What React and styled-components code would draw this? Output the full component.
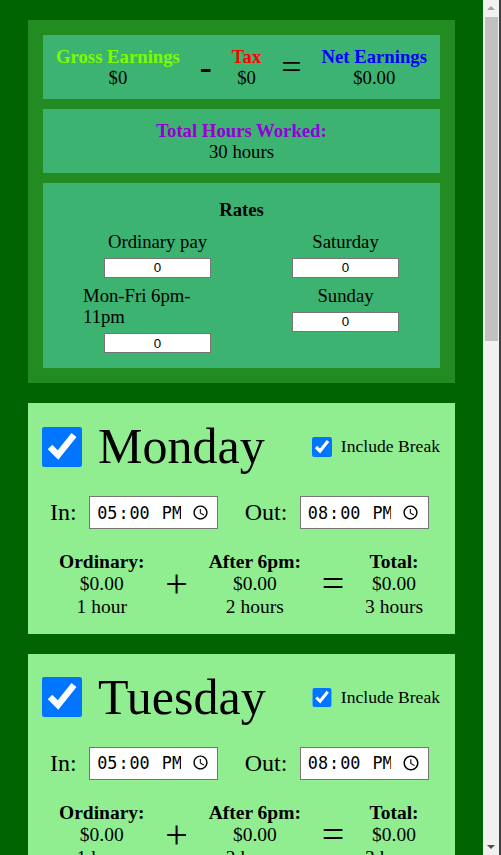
import React from "react";
import styled, { createGlobalStyle } from "styled-components";

const GlobalStyle = createGlobalStyle`
  body {
    margin: 0;
    background: #006400;
    font-family: "Liberation Serif", "Times New Roman", serif;
  }
`;

const Page = styled.div`
  display: flex;
  flex-direction: column;
  gap: 20px;
  width: 427px;
  padding: 20px 0 20px 28px;
`;

const ScrollTrack = styled.div`
  position: fixed;
  top: 0;
  right: 0;
  width: 16px;
  height: 100vh;
  background: #f1f1f1;
  border-right: 2px solid #3f3f3f;
`;

const ScrollArrow = styled.div`
  position: absolute;
  left: 4px;
  width: 0;
  height: 0;
  border-left: 4px solid transparent;
  border-right: 4px solid transparent;
  ${(p) =>
    p.down
      ? "bottom: 6px; border-top: 4px solid #505050;"
      : "top: 6px; border-bottom: 4px solid #a3a3a3;"}
`;

const ScrollThumb = styled.div`
  position: absolute;
  top: 17px;
  left: 2px;
  right: 1px;
  height: 324px;
  background: #c1c1c1;
`;

const Summary = styled.div`
  display: flex;
  flex-direction: column;
  gap: 10px;
  padding: 15px;
  background: #228b22;
`;

const Card = styled.div`
  background: #3cb371;
  padding: 10.5px 13px;
  font-size: 18.72px;
  line-height: 21.5px;
  text-align: center;
`;

const TotalsRow = styled.div`
  display: flex;
  justify-content: space-between;
  align-items: center;
`;

const Figure = styled.div`
  text-align: center;
`;

const Label = styled.div`
  font-weight: bold;
  color: ${(p) => p.color || "black"};
`;

const Operator = styled.div`
  font-size: 36px;
  line-height: 40px;
  font-weight: ${(p) => (p.bold ? "bold" : "normal")};
`;

const RatesCard = styled(Card)`
  padding: 16px 0 15px 40px;
`;

const RatesTitle = styled.div`
  font-weight: bold;
  margin-bottom: 10px;
  margin-left: -40px;
`;

const RatesGrid = styled.div`
  display: grid;
  grid-template-columns: 149px 149px;
  column-gap: 39px;
  align-items: start;
`;

const RateColumn = styled.div`
  display: flex;
  flex-direction: column;
  gap: 7px;
`;

const RateField = styled.label`
  display: flex;
  flex-direction: column;
  align-items: center;
  text-align: left;
  gap: 5.5px;
`;

const RateInput = styled.input`
  box-sizing: border-box;
  width: 107px;
  height: 20px;
  border: 1px solid #767676;
  padding: 0 2px;
  font-family: "Liberation Sans", Arial, sans-serif;
  font-size: 13.33px;
  text-align: center;
  background: white;
`;

const DayCard = styled.div`
  background: #90ee90;
  padding: 15px 15px 15.5px 14px;
`;

const DayHeader = styled.div`
  display: flex;
  align-items: center;
  justify-content: space-between;
  height: 57.5px;
`;

const DayTitle = styled.label`
  display: flex;
  align-items: center;
  gap: 16px;
  font-size: 50px;
  line-height: 57.5px;
`;

const BigCheck = styled.input`
  width: 40px;
  height: 40px;
  margin: 0;
`;

const BreakToggle = styled.label`
  display: flex;
  align-items: center;
  gap: 9px;
  font-size: 17.6px;
`;

const SmallCheck = styled.input`
  width: 19.5px;
  height: 19.5px;
  margin: 0;
`;

const TimesRow = styled.div`
  display: flex;
  align-items: center;
  gap: 26.5px;
  padding-left: 8px;
  margin-top: 20.5px;
`;

const TimeField = styled.label`
  display: flex;
  align-items: center;
  gap: 12.5px;
  font-size: 24px;
`;

const TimeInput = styled.input`
  box-sizing: border-box;
  width: 129px;
  height: 33px;
  border: 1px solid #767676;
  padding: 0 5px 0 6px;
  font-family: "DejaVu Sans Mono", monospace;
  font-size: 16.8px;
  background: white;
`;

const Breakdown = styled.div`
  display: flex;
  justify-content: space-between;
  align-items: center;
  padding: 0 17px;
  margin-top: 22px;
  font-size: 19.5px;
  line-height: 22.4px;
`;

const Sign = styled.div`
  font-size: 40px;
`;

const days = [
  "Monday",
  "Tuesday",
  "Wednesday",
  "Thursday",
  "Friday",
  "Saturday",
  "Sunday",
];

const Day = ({ name }) => (
  <DayCard>
    <DayHeader>
      <DayTitle>
        <BigCheck type="checkbox" defaultChecked />
        {name}
      </DayTitle>
      <BreakToggle>
        <SmallCheck type="checkbox" defaultChecked />
        Include Break
      </BreakToggle>
    </DayHeader>
    <TimesRow>
      <TimeField>
        In:
        <TimeInput type="time" defaultValue="17:00" />
      </TimeField>
      <TimeField>
        Out:
        <TimeInput type="time" defaultValue="20:00" />
      </TimeField>
    </TimesRow>
    <Breakdown>
      <Figure>
        <Label>Ordinary:</Label>
        <div>$0.00</div>
        <div>1 hour</div>
      </Figure>
      <Sign>+</Sign>
      <Figure>
        <Label>After 6pm:</Label>
        <div>$0.00</div>
        <div>2 hours</div>
      </Figure>
      <Sign>=</Sign>
      <Figure>
        <Label>Total:</Label>
        <div>$0.00</div>
        <div>3 hours</div>
      </Figure>
    </Breakdown>
  </DayCard>
);

export default function App() {
  return (
    <Page>
      <GlobalStyle />
      <Summary>
        <Card>
          <TotalsRow>
            <Figure>
              <Label color="#7cfc00">Gross Earnings</Label>
              <div>$0</div>
            </Figure>
            <Operator bold>-</Operator>
            <Figure>
              <Label color="red">Tax</Label>
              <div>$0</div>
            </Figure>
            <Operator>=</Operator>
            <Figure>
              <Label color="blue">Net Earnings</Label>
              <div>$0.00</div>
            </Figure>
          </TotalsRow>
        </Card>
        <Card>
          <Label color="#9400d3">Total Hours Worked:</Label>
          <div>30 hours</div>
        </Card>
        <RatesCard>
          <RatesTitle>Rates</RatesTitle>
          <RatesGrid>
            <RateColumn>
              <RateField>
                Ordinary pay
                <RateInput defaultValue="0" />
              </RateField>
              <RateField>
                Mon-Fri 6pm-11pm
                <RateInput defaultValue="0" />
              </RateField>
            </RateColumn>
            <RateColumn>
              <RateField>
                Saturday
                <RateInput defaultValue="0" />
              </RateField>
              <RateField>
                Sunday
                <RateInput defaultValue="0" />
              </RateField>
            </RateColumn>
          </RatesGrid>
        </RatesCard>
      </Summary>
      {days.map((d) => (
        <Day key={d} name={d} />
      ))}
      <ScrollTrack aria-hidden="true">
        <ScrollArrow />
        <ScrollThumb />
        <ScrollArrow down />
      </ScrollTrack>
    </Page>
  );
}
